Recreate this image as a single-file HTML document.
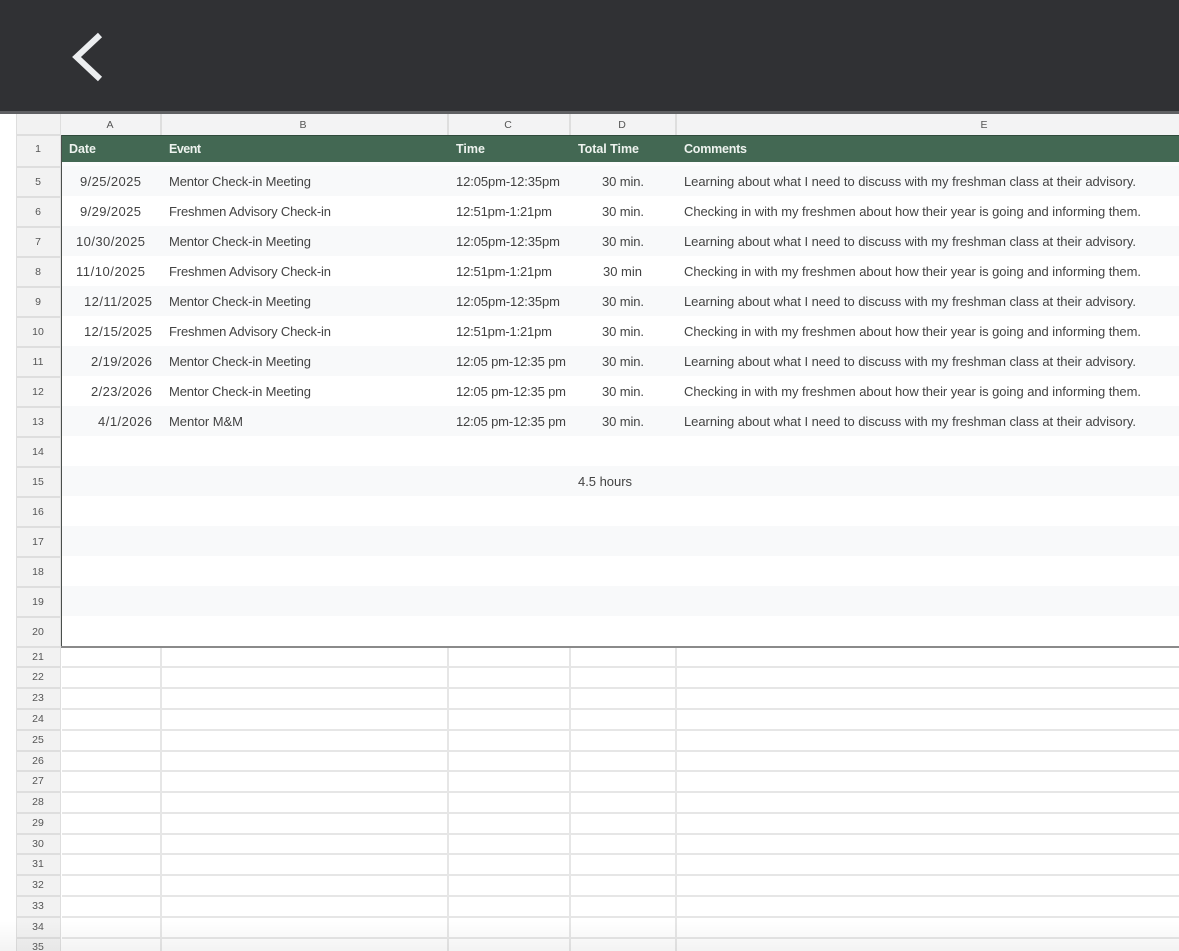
<!DOCTYPE html>
<html><head><meta charset="utf-8"><style>
html,body{margin:0;padding:0;background:#fff;width:1179px;height:951px;overflow:hidden}
svg{display:block}
text{font-family:"Liberation Sans",sans-serif;font-size:13px;fill:#434343}
.h{font-weight:bold;fill:#eef3ef;font-size:12.5px}
.l{font-size:10.5px;fill:#555;text-anchor:middle}
</style></head><body>
<svg width="1179" height="951" viewBox="0 0 1179 951" xmlns="http://www.w3.org/2000/svg">
<rect width="1179" height="951" fill="#fff"/>
<!-- top bar -->
<rect width="1179" height="111" fill="#303134"/>
<rect y="111" width="1179" height="3" fill="#5f6063"/>
<path d="M100 35 L76.500 57 L100 79" fill="none" stroke="#eceef0" stroke-width="6"/>
<!-- headers bg -->
<rect x="16" y="114" width="1163" height="21" fill="#f3f3f4"/>
<rect x="16" y="114" width="45" height="837" fill="#f2f2f2"/>
<!-- alt rows -->
<rect x="62" y="162" width="1117" height="4" fill="#fcfcfd"/>
<g fill="#f8f9fa">
<rect x="62" y="166" width="1117" height="30"/>
<rect x="62" y="226" width="1117" height="30"/>
<rect x="62" y="286" width="1117" height="30"/>
<rect x="62" y="346" width="1117" height="30"/>
<rect x="62" y="406" width="1117" height="30"/>
<rect x="62" y="466" width="1117" height="30"/>
<rect x="62" y="526" width="1117" height="30"/>
<rect x="62" y="586" width="1117" height="30"/>
</g>
<!-- grid below the table -->
<g fill="#e6e6e6">
<rect x="62" y="666" width="1117" height="2"/>
<rect x="62" y="687" width="1117" height="2"/>
<rect x="62" y="708" width="1117" height="2"/>
<rect x="62" y="729" width="1117" height="2"/>
<rect x="62" y="750" width="1117" height="2"/>
<rect x="62" y="770" width="1117" height="2"/>
<rect x="62" y="791" width="1117" height="2"/>
<rect x="62" y="812" width="1117" height="2"/>
<rect x="62" y="833" width="1117" height="2"/>
<rect x="62" y="853" width="1117" height="2"/>
<rect x="62" y="874" width="1117" height="2"/>
<rect x="62" y="895" width="1117" height="2"/>
<rect x="62" y="916" width="1117" height="2"/>
<rect x="62" y="937" width="1117" height="2"/>
<rect x="160" y="648" width="2" height="303"/>
<rect x="447" y="648" width="2" height="303"/>
<rect x="569" y="648" width="2" height="303"/>
<rect x="675" y="648" width="2" height="303"/>
</g>
<!-- row header separators -->
<g fill="#dedede">
<rect x="16" y="134" width="45" height="2"/>
<rect x="16" y="166" width="45" height="2"/>
<rect x="16" y="196" width="45" height="2"/>
<rect x="16" y="226" width="45" height="2"/>
<rect x="16" y="256" width="45" height="2"/>
<rect x="16" y="286" width="45" height="2"/>
<rect x="16" y="316" width="45" height="2"/>
<rect x="16" y="346" width="45" height="2"/>
<rect x="16" y="376" width="45" height="2"/>
<rect x="16" y="406" width="45" height="2"/>
<rect x="16" y="436" width="45" height="2"/>
<rect x="16" y="466" width="45" height="2"/>
<rect x="16" y="496" width="45" height="2"/>
<rect x="16" y="526" width="45" height="2"/>
<rect x="16" y="556" width="45" height="2"/>
<rect x="16" y="586" width="45" height="2"/>
<rect x="16" y="616" width="45" height="2"/>
<rect x="16" y="646" width="45" height="2"/>
<rect x="16" y="666" width="45" height="2"/>
<rect x="16" y="687" width="45" height="2"/>
<rect x="16" y="708" width="45" height="2"/>
<rect x="16" y="729" width="45" height="2"/>
<rect x="16" y="750" width="45" height="2"/>
<rect x="16" y="770" width="45" height="2"/>
<rect x="16" y="791" width="45" height="2"/>
<rect x="16" y="812" width="45" height="2"/>
<rect x="16" y="833" width="45" height="2"/>
<rect x="16" y="853" width="45" height="2"/>
<rect x="16" y="874" width="45" height="2"/>
<rect x="16" y="895" width="45" height="2"/>
<rect x="16" y="916" width="45" height="2"/>
<rect x="16" y="937" width="45" height="2"/>
<rect x="160" y="114" width="2" height="21"/>
<rect x="447" y="114" width="2" height="21"/>
<rect x="569" y="114" width="2" height="21"/>
<rect x="675" y="114" width="2" height="21"/>
<rect x="16" y="114" width="1" height="837"/>
<rect x="60" y="114" width="1" height="837"/>
</g>
<!-- green header -->
<rect x="61" y="135" width="1118" height="27" fill="#436853"/>
<rect x="61" y="135" width="1118" height="1" fill="#2f4a3b"/>
<!-- table border -->
<rect x="61" y="135" width="1" height="512" fill="#4a4f4c"/>
<rect x="61" y="646" width="1118" height="2" fill="#8a8a8a"/>
<!-- column letters -->
<text class="l" x="110" y="128">A</text>
<text class="l" x="303" y="128">B</text>
<text class="l" x="508" y="128">C</text>
<text class="l" x="622" y="128">D</text>
<text class="l" x="984" y="128">E</text>
<!-- row numbers -->
<text class="l" x="38" y="152">1</text>
<text class="l" x="38" y="185">5</text>
<text class="l" x="38" y="215">6</text>
<text class="l" x="38" y="245">7</text>
<text class="l" x="38" y="275">8</text>
<text class="l" x="38" y="305">9</text>
<text class="l" x="38" y="335">10</text>
<text class="l" x="38" y="365">11</text>
<text class="l" x="38" y="395">12</text>
<text class="l" x="38" y="425">13</text>
<text class="l" x="38" y="455">14</text>
<text class="l" x="38" y="485">15</text>
<text class="l" x="38" y="515">16</text>
<text class="l" x="38" y="545">17</text>
<text class="l" x="38" y="575">18</text>
<text class="l" x="38" y="605">19</text>
<text class="l" x="38" y="635">20</text>
<text class="l" x="38" y="660">21</text>
<text class="l" x="38" y="680">22</text>
<text class="l" x="38" y="701">23</text>
<text class="l" x="38" y="722">24</text>
<text class="l" x="38" y="743">25</text>
<text class="l" x="38" y="764">26</text>
<text class="l" x="38" y="784">27</text>
<text class="l" x="38" y="805">28</text>
<text class="l" x="38" y="826">29</text>
<text class="l" x="38" y="847">30</text>
<text class="l" x="38" y="867">31</text>
<text class="l" x="38" y="888">32</text>
<text class="l" x="38" y="909">33</text>
<text class="l" x="38" y="930">34</text>
<text class="l" x="38" y="950">35</text>
<!-- header text -->
<text class="h" x="69" y="153" textLength="27">Date</text>
<text class="h" x="169" y="153" textLength="32">Event</text>
<text class="h" x="456" y="153" textLength="29">Time</text>
<text class="h" x="578" y="153" textLength="61">Total Time</text>
<text class="h" x="684" y="153" textLength="63">Comments</text>
<!-- row 5 -->
<text x="80" y="186" textLength="61">9/25/2025</text>
<text x="169" y="186" textLength="142">Mentor Check-in Meeting</text>
<text x="456" y="186" textLength="104">12:05pm-12:35pm</text>
<text x="602" y="186" textLength="42">30 min.</text>
<text x="684" y="186" textLength="452">Learning about what I need to discuss with my freshman class at their advisory.</text>
<!-- row 6 -->
<text x="80" y="216" textLength="61">9/29/2025</text>
<text x="169" y="216" textLength="162">Freshmen Advisory Check-in</text>
<text x="456" y="216" textLength="96">12:51pm-1:21pm</text>
<text x="602" y="216" textLength="42">30 min.</text>
<text x="684" y="216" textLength="457">Checking in with my freshmen about how their year is going and informing them.</text>
<!-- row 7 -->
<text x="76" y="246" textLength="69">10/30/2025</text>
<text x="169" y="246" textLength="142">Mentor Check-in Meeting</text>
<text x="456" y="246" textLength="104">12:05pm-12:35pm</text>
<text x="602" y="246" textLength="42">30 min.</text>
<text x="684" y="246" textLength="452">Learning about what I need to discuss with my freshman class at their advisory.</text>
<!-- row 8 -->
<text x="76" y="276" textLength="69">11/10/2025</text>
<text x="169" y="276" textLength="162">Freshmen Advisory Check-in</text>
<text x="456" y="276" textLength="96">12:51pm-1:21pm</text>
<text x="603" y="276" textLength="39">30 min</text>
<text x="684" y="276" textLength="457">Checking in with my freshmen about how their year is going and informing them.</text>
<!-- row 9 -->
<text x="84" y="306" textLength="68">12/11/2025</text>
<text x="169" y="306" textLength="142">Mentor Check-in Meeting</text>
<text x="456" y="306" textLength="104">12:05pm-12:35pm</text>
<text x="602" y="306" textLength="42">30 min.</text>
<text x="684" y="306" textLength="452">Learning about what I need to discuss with my freshman class at their advisory.</text>
<!-- row 10 -->
<text x="84" y="336" textLength="68">12/15/2025</text>
<text x="169" y="336" textLength="162">Freshmen Advisory Check-in</text>
<text x="456" y="336" textLength="96">12:51pm-1:21pm</text>
<text x="602" y="336" textLength="42">30 min.</text>
<text x="684" y="336" textLength="457">Checking in with my freshmen about how their year is going and informing them.</text>
<!-- row 11 -->
<text x="91" y="366" textLength="61">2/19/2026</text>
<text x="169" y="366" textLength="142">Mentor Check-in Meeting</text>
<text x="456" y="366" textLength="110">12:05 pm-12:35 pm</text>
<text x="602" y="366" textLength="42">30 min.</text>
<text x="684" y="366" textLength="452">Learning about what I need to discuss with my freshman class at their advisory.</text>
<!-- row 12 -->
<text x="91" y="396" textLength="61">2/23/2026</text>
<text x="169" y="396" textLength="142">Mentor Check-in Meeting</text>
<text x="456" y="396" textLength="110">12:05 pm-12:35 pm</text>
<text x="602" y="396" textLength="42">30 min.</text>
<text x="684" y="396" textLength="457">Checking in with my freshmen about how their year is going and informing them.</text>
<!-- row 13 -->
<text x="98" y="426" textLength="54">4/1/2026</text>
<text x="169" y="426" textLength="74">Mentor M&amp;M</text>
<text x="456" y="426" textLength="110">12:05 pm-12:35 pm</text>
<text x="602" y="426" textLength="42">30 min.</text>
<text x="684" y="426" textLength="452">Learning about what I need to discuss with my freshman class at their advisory.</text>
<!-- row 15 -->
<text x="578" y="486" textLength="54">4.5 hours</text>
<!-- bottom fade -->
<defs><linearGradient id="f" x1="0" y1="0" x2="0" y2="1"><stop offset="0" stop-color="#888" stop-opacity="0"/><stop offset="1" stop-color="#888" stop-opacity=".1"/></linearGradient></defs>
<rect y="921" width="1179" height="30" fill="url(#f)"/>
</svg>
</body></html>
